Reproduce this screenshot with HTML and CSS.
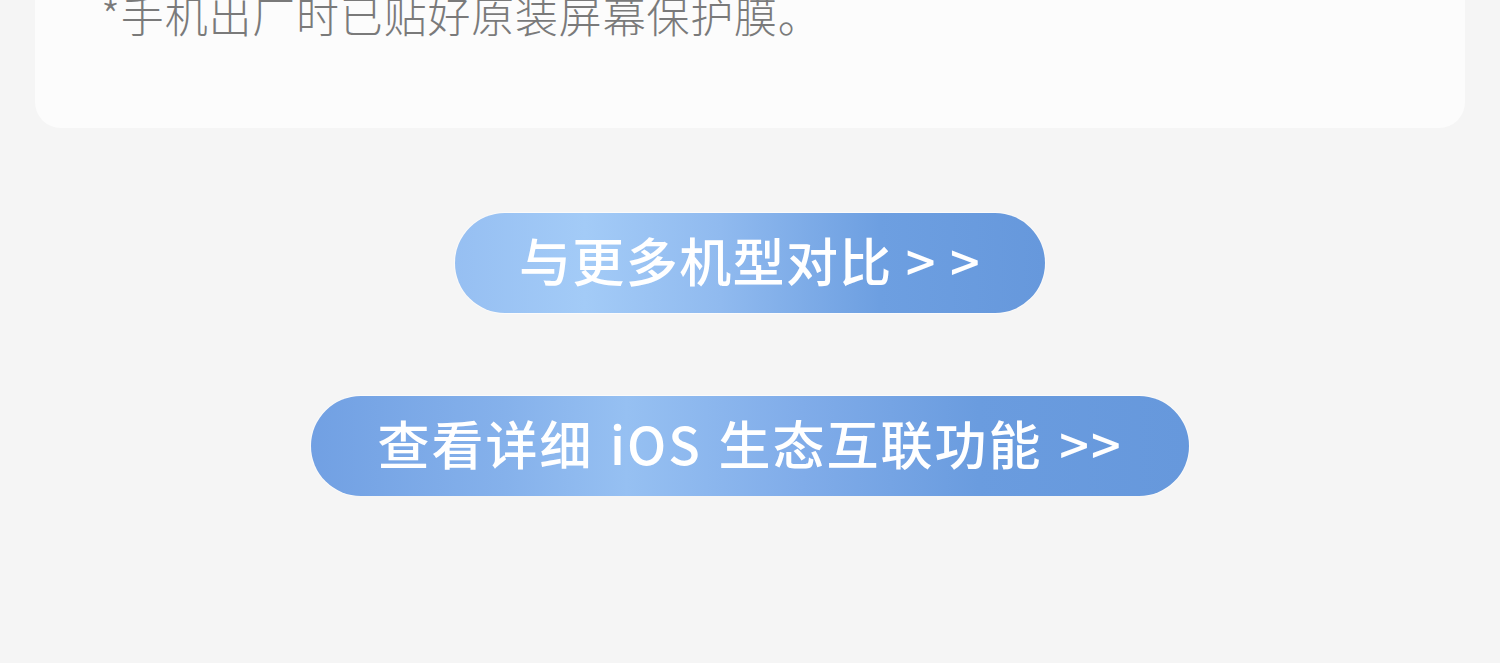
FILE: index.html
```html
<!DOCTYPE html>
<html>
<head>
<meta charset='utf-8'>
<title>对比</title>
<link rel="stylesheet" href="styles.css">
</head>
<body>

<div class="card">
	<p class="note">*手机出厂时已贴好原装屏幕保护膜。</p>
</div>

<div class="links">
	<a class="btn btn-compare" href="#">与更多机型对比 &gt; &gt;</a>
	<a class="btn btn-ios" href="#">查看详细 iOS 生态互联功能 &gt;&gt;</a>
</div>

</body>
</html>
```

FILE: styles.css
```css
body, html {
	margin: 0;
	background: #f5f5f5;
	font-family: "Noto Sans CJK SC", "Noto Sans", sans-serif;
}

.card {
	margin: -16px 35px 0;
	padding: 0 66px 84px;
	background: #fcfcfc;
	border-radius: 0 0 26px 26px;
}

.note {
	margin: 0;
	font-size: 43px;
	line-height: 60px;
	letter-spacing: 0.8px;
	font-weight: 300;
	color: #7a7a7a;
}

.links {
	display: flex;
	flex-direction: column;
	align-items: center;
	gap: 83px;
	padding-top: 85px;
}

.btn {
	display: flex;
	align-items: center;
	justify-content: center;
	box-sizing: border-box;
	height: 100px;
	padding-bottom: 8px;
	border-radius: 50px;
	color: #fff;
	font-size: 52px;
	letter-spacing: 1.4px;
	font-weight: 500;
	text-decoration: none;
	box-shadow: 0 0 0 1px rgba(255, 255, 255, 0.55);
}

.btn-compare {
	width: 590px;
	background: linear-gradient(90deg, #96bff2 0%, #a3cbf7 22%, #90baef 45%, #6d9fe1 72%, #6698dc 100%);
}

.btn-ios {
	width: 878px;
	letter-spacing: 2px;
	word-spacing: 3px;
	background: linear-gradient(90deg, #71a0e3 0%, #85b1eb 22%, #96c0f2 36%, #80ace9 56%, #6a9cdf 76%, #6698dc 100%);
}
```
